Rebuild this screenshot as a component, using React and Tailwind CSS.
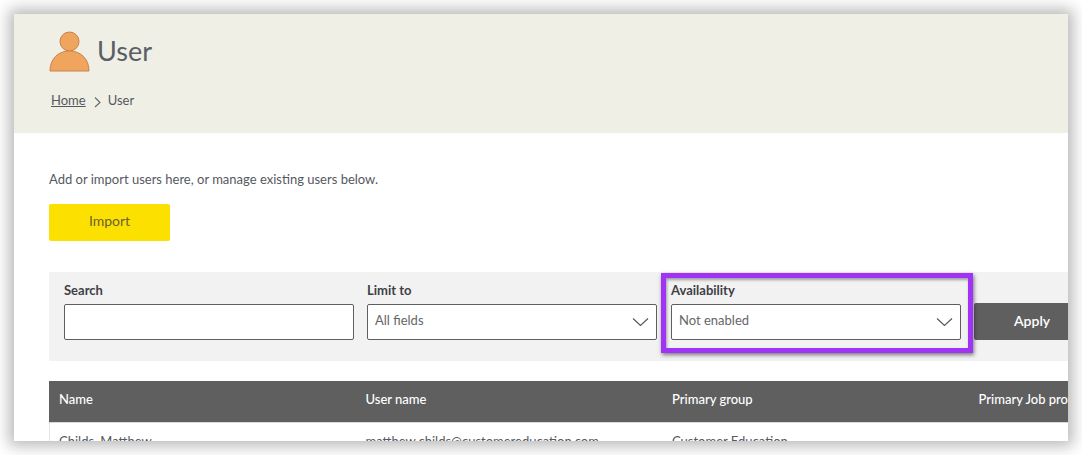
import React from 'react';

const UserIcon = () => (
  <svg width="41" height="41" viewBox="0 0 41 41" className="shrink-0">
    <circle cx="20.5" cy="10.5" r="9.5" fill="#f0a55e" stroke="#c9814a" strokeWidth="1" />
    <path d="M1 40 C1 28 9 20 20.5 20 C32 20 40 28 40 40 Z" fill="#f0a55e" stroke="#c9814a" strokeWidth="1" />
  </svg>
);

const Chevron = () => (
  <svg width="17" height="10" viewBox="0 0 17 10" fill="none" stroke="#555" strokeWidth="1.1" className="shrink-0">
    <path d="M1 1.5 L8.5 8.5 L16 1.5" />
  </svg>
);

const Field = ({ label, children }) => (
  <div className="flex flex-col w-[290px] shrink-0">
    <label className="h-[26px] text-[13px] leading-[24px] font-bold text-[#3f3f46]">{label}</label>
    <div className="h-[36px] flex items-center justify-between pl-[7px] pr-[7px] bg-white border border-[#5f5f5f] rounded-[2px]">
      {children}
    </div>
  </div>
);

const SelectField = ({ label, value }) => (
  <Field label={label}>
    <span className="text-[13px] text-[#666] pb-[2px]">{value}</span>
    <Chevron />
  </Field>
);

const columns = [
  { name: 'Name', cell: 'Childs, Matthew' },
  { name: 'User name', cell: 'matthew.childs@customereducation.com' },
  { name: 'Primary group', cell: 'Customer Education' },
  { name: 'Primary Job profile', cell: '' },
];

export default function App() {
  return (
    <div className="relative w-[1082px] h-[455px] bg-white p-[14px] overflow-hidden font-['Lato','Open_Sans',sans-serif]">
      <div className="w-[1054px] h-[427px] bg-white overflow-hidden shadow-[0_0_14px_5px_rgba(0,0,0,0.28)]">
        <header className="h-[119px] bg-[#efefe6] pl-[35px] pt-[17px]">
          <div className="flex items-center gap-[7px]">
            <UserIcon />
            <h1 className="text-[27px] leading-[40px] -mt-[1px] text-[#5a5f66]">User</h1>
          </div>
          <nav className="flex items-center mt-[18px] ml-[2px] text-[13px] leading-[20px] text-[#55595f]">
            <a className="underline">Home</a>
            <svg width="10" height="12" viewBox="0 0 10 12" fill="none" stroke="#666" strokeWidth="1.1" className="ml-[7px] mr-[5px] mt-[4px]">
              <path d="M2 1.5 L7 6.5 L2 11" />
            </svg>
            <span>User</span>
          </nav>
        </header>

        <main className="pl-[35px]">
          <p className="mt-[36px] text-[13px] leading-[20px] text-[#55595f]">Add or import users here, or manage existing users below.</p>
          <button className="block mt-[15px] w-[121px] h-[37px] pb-[5px] bg-[#fce100] rounded-[2px] text-[14px] text-[#6b6230]">Import</button>

          <div className="mt-[31px] h-[89px] pl-[15px] pt-[6px] bg-[#f2f2f2] flex">
            <Field label="Search" />
            <div className="ml-[13px]"><SelectField label="Limit to" value="All fields" /></div>
            <div className="ml-[14px]"><SelectField label="Availability" value="Not enabled" /></div>
            <button className="ml-[13px] mt-[25px] w-[114px] h-[37px] pb-[3px] shrink-0 bg-[#5f5f5f] rounded-[2px] text-[14px] font-semibold text-white text-left pl-[40px]">Apply</button>
          </div>

          <table className="mt-[20px] w-[1226px] table-fixed text-[13px]">
            <thead>
              <tr className="h-[41px] bg-[#5f5f5f] border-b border-[#d9d9d9]">
                {columns.map((c) => (
                  <th key={c.name} className="pl-[10px] pb-[4px] text-left font-medium text-white whitespace-nowrap">{c.name}</th>
                ))}
              </tr>
            </thead>
            <tbody>
              <tr>
                {columns.map((c) => (
                  <td key={c.name} className="pl-[10px] pt-[9px] text-[#55595f] whitespace-nowrap first:shadow-[inset_1px_0_0_#e5e5e5]">{c.cell}</td>
                ))}
              </tr>
            </tbody>
          </table>
        </main>
      </div>

      <div className="absolute left-[661px] top-[273px] w-[312px] h-[80px] border-[5px] border-[#a033f5] shadow-[1px_2px_4px_rgba(0,0,0,0.5),inset_1px_2px_3px_rgba(0,0,0,0.35)]" />
    </div>
  );
}
